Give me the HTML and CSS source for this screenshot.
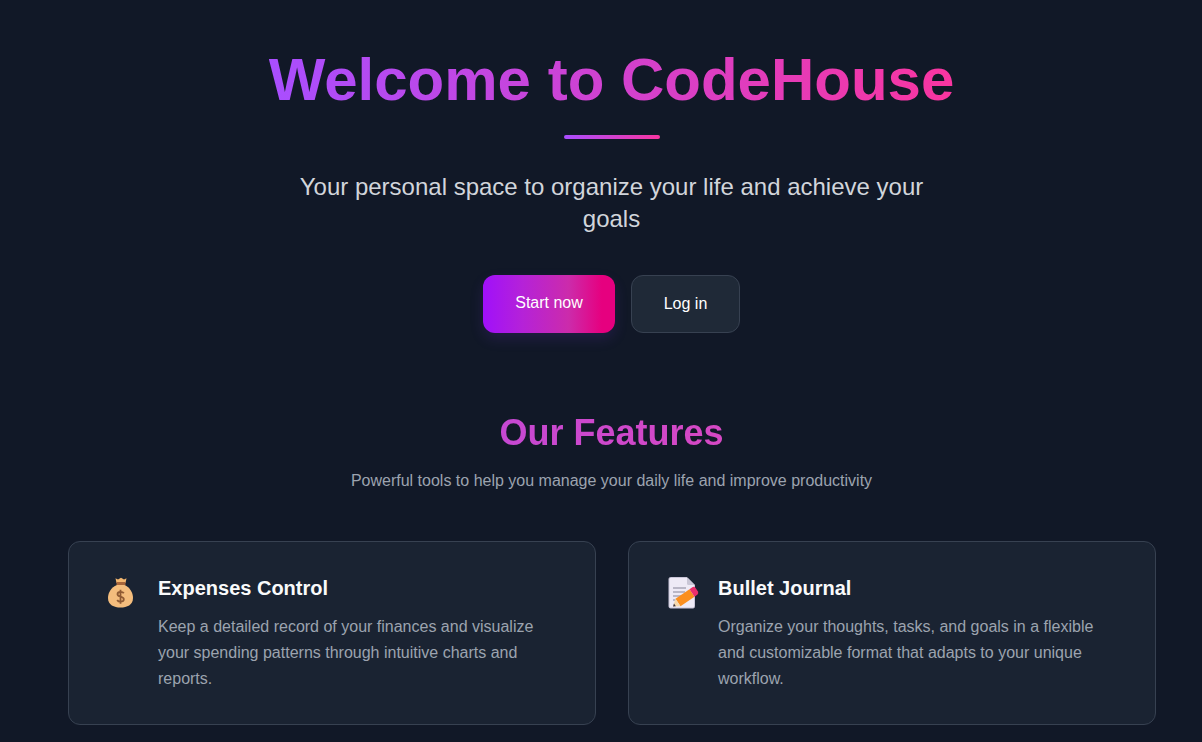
FILE: index.html
```html
<!DOCTYPE html>
<html lang="en">
<head>
<meta charset="utf-8">
<title>CodeHouse</title>
<link rel="stylesheet" href="styles.css">
</head>
<body>
<main class="page">
  <section class="hero">
    <h1 class="hero-title">Welcome to CodeHouse</h1>
    <div class="divider"></div>
    <p class="hero-sub">Your personal space to organize your life and achieve your goals</p>
    <div class="actions">
      <a class="btn btn-primary"><span>Start now</span></a>
      <a class="btn btn-secondary">Log in</a>
    </div>
  </section>
  <section class="features">
    <header class="features-head">
      <h2 class="features-title">Our Features</h2>
      <p class="features-sub">Powerful tools to help you manage your daily life and improve productivity</p>
    </header>
    <div class="grid">
      <article class="card">
        <div class="icon">
          <svg viewBox="0 0 32 32" width="32" height="32">
            <g transform="translate(-1 0)">
              <path d="M9.500 1.200 L12 2.400 L15 .8 L18 2.400 L20.500 1.200 L19.500 6 L10.500 6 Z" fill="#f4b76f"/>
              <path d="M10.500 5 H19.500 V8.500 H10.500 Z" fill="#a8663a"/>
              <path d="M11 8 C5 10.500 2 15.500 2 21 C2 28 8 30.500 14.500 30.500 C21 30.500 27 28 27 21 C27 15.500 24 10.500 18.500 8 Z" fill="#f4bd7d"/>
              <path d="M17.800 16.300 C17.200 15.200 16 14.800 14.500 14.800 C12.800 14.800 11.500 15.800 11.500 17.200 C11.500 20.400 17.800 19 17.800 22.300 C17.800 23.800 16.400 24.700 14.500 24.700 C13 24.700 11.800 24.100 11.200 23 M14.500 12.800 V26.700" fill="none" stroke="#8f5a33" stroke-width="1.800"/>
            </g>
          </svg>
        </div>
        <div class="card-body">
          <h3 class="card-title">Expenses Control</h3>
          <p class="card-text">Keep a detailed record of your finances and visualize your spending patterns through intuitive charts and reports.</p>
        </div>
      </article>
      <article class="card">
        <div class="icon">
          <svg viewBox="0 0 32 32" width="32" height="32">
            <path d="M3.500 .5 H20 L27.500 8 V29.500 A1.500 1.500 0 0 1 26 31 H3.500 A1.500 1.500 0 0 1 2 29.500 V2 A1.500 1.500 0 0 1 3.500 .5 Z" fill="#eeeaf6" stroke="#c9c5d8"/>
            <path d="M20 .5 L27.500 8 H21.500 A1.500 1.500 0 0 1 20 6.500 Z" fill="#c9c6d6"/>
            <path d="M6 11 H19 M6 15 H18 M6 19 H14 M6 23 H9" stroke="#a9a6b8" stroke-width="1.300" fill="none"/>
            <path d="M22.500 12.300 L27.500 19.700 L13.500 29.200 L8.500 21.800 Z" fill="#fb8f1f"/>
            <path d="M22.500 12.300 L25.300 10.200 Q27.200 9.300 28.400 10.800 L31 14.600 Q31.800 16.400 30.300 17.700 L27.500 19.700 Z" fill="#ec2f6c"/>
            <path d="M8.500 21.800 L13.500 29.200 L6 29.500 Z" fill="#f6d9ae"/>
            <path d="M7 26.500 L8.900 29.300 L6 29.500 Z" fill="#3b3340"/>
          </svg>
        </div>
        <div class="card-body">
          <h3 class="card-title">Bullet Journal</h3>
          <p class="card-text">Organize your thoughts, tasks, and goals in a flexible and customizable format that adapts to your unique workflow.</p>
        </div>
      </article>
    </div>
  </section>
</main>
</body>
</html>
```
FILE: styles.css
```css
* { box-sizing: border-box; }
html, body { margin: 0; height: 100%; }
body {
  background: #111827;
  font-family: "Liberation Sans", Arial, sans-serif;
  overflow: hidden;
}
.page { padding: 47px 46px 0 68px; }
.hero {
  display: flex;
  flex-direction: column;
  align-items: center;
  margin-right: 1px;
  text-align: center;
}
.hero-title {
  margin: 0;
  font-size: 60px;
  line-height: 66px;
  font-weight: 700;
  background: linear-gradient(90deg, #a94eff, #f935a0);
  -webkit-background-clip: text;
  background-clip: text;
  color: transparent;
}
.divider {
  width: 96px;
  height: 4px;
  margin-top: 22px;
  border-radius: 2px;
  background: linear-gradient(90deg, #a94eff, #f935a0);
}
.hero-sub {
  margin: 32px 0 0;
  width: 672px;
  font-size: 24px;
  line-height: 32px;
  color: #d1d5db;
}
.actions { display: flex; gap: 16px; margin-top: 40px; }
.btn {
  display: flex;
  align-items: center;
  justify-content: center;
  height: 58px;
  border-radius: 12px;
  font-size: 16px;
  color: #fff;
}
.btn-primary {
  width: 132px;
  padding-bottom: 2px;
  background: linear-gradient(90deg, #a010fa 0%, #b522d8 30%, #cc2bab 65%, #e6007f 90%);
  box-shadow: 0 6px 14px rgba(124, 58, 237, .15);
}
.btn-secondary {
  width: 109px;
  background: #1f2937;
  border: 1px solid #374151;
}
.features { margin-top: 73px; }
.features-head { margin-right: 1px; text-align: center; }
.features-title {
  margin: 0;
  font-size: 36px;
  line-height: 54px;
  font-weight: 700;
  background: linear-gradient(90deg, #a648ee, #f648a8);
  -webkit-background-clip: text;
  background-clip: text;
  color: transparent;
}
.features-sub {
  margin: 9px 0 0;
  font-size: 16px;
  line-height: 24px;
  color: #9ca3af;
}
.grid {
  display: grid;
  grid-template-columns: 1fr 1fr;
  gap: 32px;
  margin-top: 48px;
}
.card {
  display: flex;
  height: 184px;
  padding: 32px 32px 32px 38px;
  background: #1a2332;
  border: 1px solid #374151;
  border-radius: 12px;
}
.icon { flex: none; width: 51px; padding-top: 3px; }
.icon svg { display: block; }
.card-title {
  margin: 0;
  font-size: 20px;
  line-height: 28px;
  font-weight: 700;
  color: #f9fafb;
}
.card-text {
  margin: 12px 0 0;
  font-size: 16px;
  line-height: 26px;
  color: #9ca3af;
}
```
